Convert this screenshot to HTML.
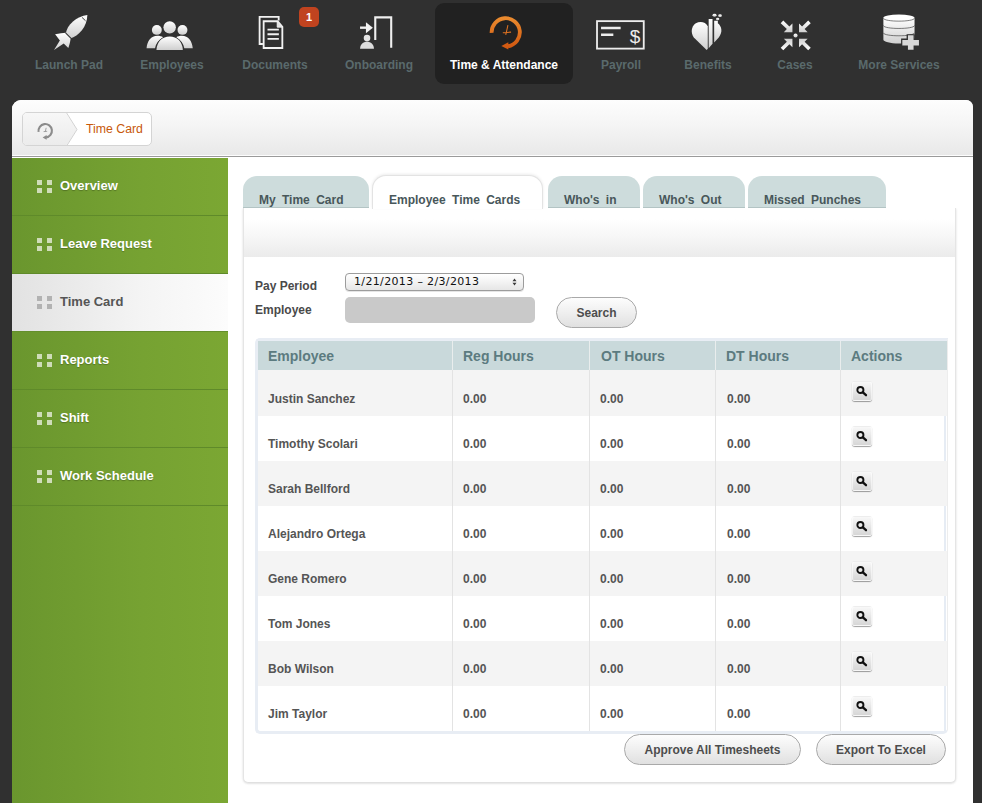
<!DOCTYPE html>
<html>
<head>
<meta charset="utf-8">
<title>Time Card</title>
<style>
*{box-sizing:border-box;margin:0;padding:0}
html,body{width:982px;height:803px;overflow:hidden;background:#303030;font-family:"Liberation Sans",Arial,Helvetica,sans-serif;}
body{position:relative}
.abs{position:absolute}
/* top nav */
.nav{position:absolute;left:0;top:0;width:982px;height:100px}
.nav .item{position:absolute;top:0;height:86px;text-align:center;color:#5a6a6c;font-weight:bold;font-size:12px;white-space:nowrap}
.nav .item .lbl{position:absolute;left:50%;top:58px;transform:translateX(-50%);line-height:14px}
.nav .item svg{position:absolute;overflow:visible}
.nav .active{position:absolute;left:435px;top:3px;width:138px;height:81px;border-radius:9px;background:#212121}
.nav .item.on{color:#fff}
.badge{position:absolute;left:299px;top:7px;width:20px;height:20px;border-radius:5px;background:#c0431f;color:#fff;font-size:11px;font-weight:bold;line-height:20px;text-align:center}
/* container */
.wrap{position:absolute;left:12px;top:100px;width:961px;height:720px;background:#fff;border-radius:9px 7px 0 0;overflow:hidden}
.hdr{position:absolute;left:0;top:0;width:961px;height:57px;background:linear-gradient(#fdfdfd,#f5f5f5 45%,#e8e8e8);border-bottom:1px solid #9a9a9a;box-shadow:inset 0 -1px 0 #fdfdfd}
.crumb{position:absolute;left:10px;top:12px;width:130px;height:34px;border:1px solid #d4d4d4;border-radius:5px;background:#fff;overflow:hidden}
.crumb .home{position:absolute;left:0;top:0;width:45px;height:32px;background:linear-gradient(#f6f6f6,#ececec)}
.crumb .txt{position:absolute;left:63px;top:0;line-height:32px;font-size:12.3px;color:#c8590a}
/* sidebar */
.side{position:absolute;left:0;top:58px;width:216px;height:680px;background:linear-gradient(90deg,#6a962e,#76a232 60%,#7ba733)}
.side .it{position:relative;height:58px;border-bottom:1px solid #5f8a2a;color:#fff;font-weight:bold;font-size:13px;line-height:15px;padding:20px 0 0 48px;text-shadow:0 1px 1px rgba(0,0,0,.25)}
.side .it.sel{background:linear-gradient(90deg,#e2e2e2,#f4f4f4 60%,#fcfcfc);color:#555;text-shadow:none;border-bottom-color:#648f2c}
.grip{position:absolute;left:25px;top:22px;width:15px;height:14px}
.grip i{position:absolute;width:5px;height:5px;background:#cfdcb9}
.sel .grip i{background:#b2b2b2}
.grip i:nth-child(1){left:0;top:0}.grip i:nth-child(2){left:10px;top:0}.grip i:nth-child(3){left:0;top:8px}.grip i:nth-child(4){left:10px;top:8px}
/* tabs */
.tab{position:absolute;top:76px;height:32px;background:#cddcdc;border-radius:14px 14px 0 0;color:#48575a;font-weight:bold;font-size:12px;word-spacing:3px;line-height:14px;padding:17px 0 0 16px;text-align:left;white-space:nowrap;border-bottom:1px solid #b3c4c4}
.tab.on{background:#fff;border:1px solid #e3e3e3;border-bottom:none;box-shadow:0 -1px 3px rgba(0,0,0,.08);top:75px;height:34px;padding:17px 0 0 16px}
.panel{position:absolute;left:231px;top:108px;width:713px;height:575px;background:#fff;border-radius:0 0 5px 5px;box-shadow:inset 1px 0 0 #e5e5e5,inset -1px 0 0 #e5e5e5,inset 0 -1px 0 #e0e0e0,0 1px 2px rgba(0,0,0,.08),0 0 3px rgba(0,0,0,.08)}
.band{position:absolute;left:1px;top:0;width:711px;height:49px;background:linear-gradient(#fff,#fff 22%,#f7f7f7 58%,#ebebeb)}
.panel::before{content:"";position:absolute;left:-6px;right:-6px;top:-6px;height:6px;background:#fff}
.lab{position:absolute;left:12px;font-size:12px;font-weight:bold;color:#4a4a4a;line-height:14px}
.sel1{position:absolute;left:102px;top:65px;width:179px;height:18px;border:1px solid #9c9c9c;border-radius:4px;background:linear-gradient(#fff,#f3f3f3 50%,#e6e6e6);font-family:"DejaVu Sans","Liberation Sans",sans-serif;font-size:11px;letter-spacing:0.35px;line-height:16px;padding-left:8px;color:#111;box-shadow:0 1px 0 rgba(0,0,0,.1)}
.inp{position:absolute;left:102px;top:89px;width:190px;height:26px;border-radius:5px;background:#c9c9c9}
.btn{position:absolute;height:31px;border:1px solid #a9a9a9;border-radius:16px;background:linear-gradient(#fdfdfd,#ececec 60%,#e0e0e0);font-weight:bold;font-size:12px;color:#4d4d4d;line-height:30px;text-align:center;white-space:nowrap}
/* table */
.tbl{position:absolute;left:12px;top:130px;width:693px;height:396px;border:3px solid #e8edf4;border-right:1px solid #ededed;border-radius:5px 0 5px 5px;background:#fff}
.rb{position:absolute;left:686px;top:29px;width:2px;height:361px;background:#e6ecf4}
.th{position:absolute;top:0;height:29px;background:#c9d9db;color:#5c7b80;font-weight:bold;font-size:14px;line-height:30px;padding-left:10px;border-left:1px solid #e9eded}
.row{position:absolute;left:0;width:686px;height:45px}
.row.odd{background:#f4f4f4;width:689px}
.row span{position:absolute;top:21px;font-size:12px;font-weight:bold;color:#555;line-height:14px;white-space:nowrap}
.row.first span{top:22px}
.vl{position:absolute;top:29px;width:1px;height:361px;background:#e3e3e3}
.mag{position:absolute;left:594px;top:10px;width:20px;height:20px;border-radius:3px;background:linear-gradient(#f8f8f8,#ececec 35%,#d6d6d6);border:1px solid rgba(255,255,255,.55);border-bottom-color:rgba(0,0,0,.0);box-shadow:0 1px 1px rgba(0,0,0,.38)}
</style>
</head>
<body>
<div class="nav">
  <div class="active"></div>
  <div class="item" style="left:29px;width:80px"><div class="lbl">Launch Pad</div></div>
  <div class="item" style="left:132px;width:80px"><div class="lbl">Employees</div></div>
  <div class="item" style="left:235px;width:80px"><div class="lbl">Documents</div></div>
  <div class="item" style="left:339px;width:80px"><div class="lbl">Onboarding</div></div>
  <div class="item on" style="left:444px;width:120px"><div class="lbl">Time &amp; Attendance</div></div>
  <div class="item" style="left:581px;width:80px"><div class="lbl">Payroll</div></div>
  <div class="item" style="left:668px;width:80px"><div class="lbl">Benefits</div></div>
  <div class="item" style="left:755px;width:80px"><div class="lbl">Cases</div></div>
  <div class="item" style="left:849px;width:100px"><div class="lbl">More Services</div></div>
  <div class="badge">1</div>
<svg class="abs" style="left:0;top:0" width="982" height="100" viewBox="0 0 982 100">
  <defs>
    <linearGradient id="gw" x1="0" y1="0" x2="0" y2="1"><stop offset="0" stop-color="#ffffff"/><stop offset="1" stop-color="#cfcfcf"/></linearGradient>
    <linearGradient id="go" x1="0" y1="0" x2="0" y2="1"><stop offset="0" stop-color="#ea8a2e"/><stop offset="1" stop-color="#d25a12"/></linearGradient>
  </defs>
  <!-- rocket + people : zoom coords offset (30,5) scale 1/5.456 -->
  <g transform="translate(30,5) scale(0.18328)" fill="url(#gw)">
    <path d="M313,54 C312,118 266,168 219,183 L195,158 C200,108 256,60 313,54 Z"/>
    <path d="M284,68 L303,86" stroke="#303030" stroke-width="5" fill="none"/>
    <path d="M137,160 C160,156 180,153 196,152 L222,180 C220,200 214,222 209,234 L184,210 L131,246 L163,194 Z"/>
    <path d="M194,152 L224,182" stroke="#303030" stroke-width="6" fill="none"/>
    <circle cx="692" cy="136" r="27"/>
    <circle cx="832" cy="136" r="27"/>
    <path d="M636,236 C640,195 660,170 695,168 C708,168 718,171 726,176 C702,190 686,212 682,236 Z"/>
    <path d="M888,236 C884,195 864,170 829,168 C816,168 806,171 798,176 C822,190 838,212 842,236 Z"/>
    <circle cx="762" cy="122" r="34" stroke="#303030" stroke-width="7" paint-order="stroke"/>
    <path d="M690,246 C692,200 722,172 762,172 C802,172 832,200 834,246 Z" stroke="#303030" stroke-width="7" paint-order="stroke"/>
    <rect x="680" y="246" width="170" height="10" fill="#303030"/>
  </g>
  <!-- documents + onboarding : offset (240,0) -->
  <g transform="translate(240,0) scale(0.18328)" fill="none" stroke="#f2f2f2" stroke-width="10">
    <path d="M125,240 L107,240 L107,92 L211,92 L211,112"/>
    <path d="M129,116 L205,116 L231,146 L231,262 L129,262 Z" fill="#303030"/>
    <path d="M203,116 L203,148 L231,148 Z" stroke-width="5" fill="#e4e4e4"/>
    <path d="M150,162 L212,162 M150,187 L212,187 M150,212 L212,212" stroke-width="10"/>
    <path d="M738,218 L738,95 L825,95 L825,260" stroke="#efefef" stroke-width="11.5"/>
    <path d="M655,151 L700,151" stroke-width="13"/>
    <path d="M687,121 L725,151 L687,181 Z" fill="#f2f2f2" stroke="none"/>
    <circle cx="693" cy="208" r="18" fill="#e4e4e4" stroke="none"/>
    <path d="M655,266 C657,240 672,228 693,228 C714,228 729,240 731,266 Z" fill="#dcdcdc" stroke="none"/>
  </g>
  <!-- clock + payroll : offset (470,5) -->
  <g transform="translate(470,5) scale(0.18328)" fill="none">
    <path d="M118,152 A77,77 0 1 1 207,225" stroke="url(#go)" stroke-width="21"/>
    <path d="M209,203 L209,243 L171,224 Z" fill="#d25a12"/>
    <path d="M207,110 L195,163 M179,151 L224,148" stroke="#e27422" stroke-width="5.5"/>
    <rect x="693" y="88" width="255" height="150" stroke="#ececec" stroke-width="10"/>
    <path d="M715,125 L822,125 M715,162 L782,162" stroke="#ececec" stroke-width="14"/>
  </g>
  <text x="635" y="43" font-family="Liberation Sans, sans-serif" font-size="19" fill="#ececec" text-anchor="middle">$</text>
  <!-- benefits + cases : offset (670,5) -->
  <g transform="translate(670,5) scale(0.18328)" fill="url(#gw)">
    <path d="M200,246 L206,239 L206,116 C196,93 164,86 141,100 C115,118 112,152 130,178 Z"/>
    <path d="M211,76 L232,76 L232,212 L211,236 Z"/>
    <path d="M241,86 L261,86 L261,100 C284,118 288,150 266,178 L241,204 Z"/>
    <ellipse cx="243" cy="56" rx="11" ry="8"/><ellipse cx="273" cy="58" rx="10" ry="8"/><ellipse cx="260" cy="76" rx="9" ry="7"/>
    <circle cx="685" cy="167" r="11"/>
    <g id="arr"><path d="M604,99 L618,85 L651.4,117.6 L668,101 L668,148 L621,148 L637.6,131.4 Z"/></g>
    <use href="#arr" transform="translate(1372,0) scale(-1,1)"/>
    <use href="#arr" transform="translate(0,332) scale(1,-1)"/>
    <use href="#arr" transform="translate(1372,332) scale(-1,-1)"/>
  </g>
  <!-- more services : offset (840,5) scale 1/8.183 -->
  <g transform="translate(840,5) scale(0.1222)" fill="url(#gw)">
    <path d="M355,105 L355,285 C355,300 410,316 482,316 C554,316 610,300 610,285 L610,105 Z"/>
    <ellipse cx="482" cy="105" rx="127" ry="28" fill="#fff"/>
    <path d="M355,108 C360,140 604,140 610,108 M355,168 C360,200 604,200 610,168 M355,228 C360,260 604,260 610,228" fill="none" stroke="#303030" stroke-width="5"/>
    <path d="M545,240 L612,240 L612,275 L655,275 L655,340 L612,340 L612,372 L545,372 L545,340 L500,340 L500,275 L545,275 Z" fill="#303030"/>
    <path d="M556,248 L602,248 L602,286 L646,286 L646,332 L602,332 L602,366 L556,366 L556,332 L510,332 L510,286 L556,286 Z" fill="#d8d8d8"/>
  </g>
</svg>
</div>

<div class="wrap">
  <div class="hdr">
    <div class="crumb"><svg class="abs" style="left:0;top:0" width="70" height="32" viewBox="0 0 70 32">
      <defs><linearGradient id="gh" x1="0" y1="0" x2="0" y2="1"><stop offset="0" stop-color="#f7f7f7"/><stop offset="1" stop-color="#ebebeb"/></linearGradient></defs>
      <path d="M0,0 L43,0 L54,16.5 L43,33 L0,33 Z" fill="url(#gh)"/>
      <path d="M43,-1 L54,16.5 L43,34" fill="none" stroke="#d2d2d2" stroke-width="1"/>
      <g transform="translate(0,0.8)"><path d="M15.6,18 A6.7,6.7 0 1 1 23,23.6" fill="none" stroke="#8c8c8c" stroke-width="2.1"/>
      <path d="M23.6,21.2 L23.6,26 L19.6,23.7 Z" fill="#8c8c8c"/>
      <path d="M23.2,14 L22.2,18.2 M20.6,17.8 L24.2,17.5" stroke="#9a9a9a" stroke-width="0.9" fill="none"/></g>
    </svg><div class="txt">Time Card</div></div>
  </div>
  <div class="side">
    <div class="it"><div class="grip"><i></i><i></i><i></i><i></i></div>Overview</div>
    <div class="it"><div class="grip"><i></i><i></i><i></i><i></i></div>Leave Request</div>
    <div class="it sel"><div class="grip"><i></i><i></i><i></i><i></i></div>Time Card</div>
    <div class="it"><div class="grip"><i></i><i></i><i></i><i></i></div>Reports</div>
    <div class="it"><div class="grip"><i></i><i></i><i></i><i></i></div>Shift</div>
    <div class="it"><div class="grip"><i></i><i></i><i></i><i></i></div>Work Schedule</div>
  </div>

  <div class="panel">
    <div class="band"></div>
    <div class="lab" style="top:71px">Pay Period</div>
    <div class="lab" style="top:95px">Employee</div>
    <div class="sel1">1/21/2013 – 2/3/2013<svg class="abs" style="left:165px;top:3px" width="7" height="10" viewBox="0 0 7 10"><path d="M1.5,4.2 L3.5,1.4 L5.5,4.2 Z M1.5,5.8 L3.5,8.6 L5.5,5.8 Z" fill="#3a3a3a"/></svg></div>
    <div class="inp"></div>
    <div class="btn" style="left:313px;top:89px;width:81px">Search</div>
    <div class="tbl">
      <div class="th" style="left:0px;width:194px;border-left:none">Employee</div>
      <div class="th" style="left:194px;width:137px">Reg Hours</div>
      <div class="th" style="left:331px;width:126px;padding-left:11px">OT Hours</div>
      <div class="th" style="left:457px;width:125px;padding-left:10px">DT Hours</div>
      <div class="th" style="left:582px;width:107px">Actions</div>
      <div class="rb"></div>
      <div class="row odd first" style="top:29px;height:46px"><span style="left:10px">Justin Sanchez</span><span style="left:205px">0.00</span><span style="left:342px">0.00</span><span style="left:469px">0.00</span><div class="mag" style="top:11px"><svg width="18" height="18" viewBox="0 0 18 18"><circle cx="7.4" cy="8" r="3.05" fill="none" stroke="#111" stroke-width="1.9"/><path d="M9.9 10.3 L13 13.2" stroke="#111" stroke-width="2.3" stroke-linecap="round"/></svg></div></div>
      <div class="row" style="top:75px"><span style="left:10px">Timothy Scolari</span><span style="left:205px">0.00</span><span style="left:342px">0.00</span><span style="left:469px">0.00</span><div class="mag"><svg width="18" height="18" viewBox="0 0 18 18"><circle cx="7.4" cy="8" r="3.05" fill="none" stroke="#111" stroke-width="1.9"/><path d="M9.9 10.3 L13 13.2" stroke="#111" stroke-width="2.3" stroke-linecap="round"/></svg></div></div>
      <div class="row odd" style="top:120px"><span style="left:10px">Sarah Bellford</span><span style="left:205px">0.00</span><span style="left:342px">0.00</span><span style="left:469px">0.00</span><div class="mag"><svg width="18" height="18" viewBox="0 0 18 18"><circle cx="7.4" cy="8" r="3.05" fill="none" stroke="#111" stroke-width="1.9"/><path d="M9.9 10.3 L13 13.2" stroke="#111" stroke-width="2.3" stroke-linecap="round"/></svg></div></div>
      <div class="row" style="top:165px"><span style="left:10px">Alejandro Ortega</span><span style="left:205px">0.00</span><span style="left:342px">0.00</span><span style="left:469px">0.00</span><div class="mag"><svg width="18" height="18" viewBox="0 0 18 18"><circle cx="7.4" cy="8" r="3.05" fill="none" stroke="#111" stroke-width="1.9"/><path d="M9.9 10.3 L13 13.2" stroke="#111" stroke-width="2.3" stroke-linecap="round"/></svg></div></div>
      <div class="row odd" style="top:210px"><span style="left:10px">Gene Romero</span><span style="left:205px">0.00</span><span style="left:342px">0.00</span><span style="left:469px">0.00</span><div class="mag"><svg width="18" height="18" viewBox="0 0 18 18"><circle cx="7.4" cy="8" r="3.05" fill="none" stroke="#111" stroke-width="1.9"/><path d="M9.9 10.3 L13 13.2" stroke="#111" stroke-width="2.3" stroke-linecap="round"/></svg></div></div>
      <div class="row" style="top:255px"><span style="left:10px">Tom Jones</span><span style="left:205px">0.00</span><span style="left:342px">0.00</span><span style="left:469px">0.00</span><div class="mag"><svg width="18" height="18" viewBox="0 0 18 18"><circle cx="7.4" cy="8" r="3.05" fill="none" stroke="#111" stroke-width="1.9"/><path d="M9.9 10.3 L13 13.2" stroke="#111" stroke-width="2.3" stroke-linecap="round"/></svg></div></div>
      <div class="row odd" style="top:300px"><span style="left:10px">Bob Wilson</span><span style="left:205px">0.00</span><span style="left:342px">0.00</span><span style="left:469px">0.00</span><div class="mag"><svg width="18" height="18" viewBox="0 0 18 18"><circle cx="7.4" cy="8" r="3.05" fill="none" stroke="#111" stroke-width="1.9"/><path d="M9.9 10.3 L13 13.2" stroke="#111" stroke-width="2.3" stroke-linecap="round"/></svg></div></div>
      <div class="row" style="top:345px"><span style="left:10px">Jim Taylor</span><span style="left:205px">0.00</span><span style="left:342px">0.00</span><span style="left:469px">0.00</span><div class="mag"><svg width="18" height="18" viewBox="0 0 18 18"><circle cx="7.4" cy="8" r="3.05" fill="none" stroke="#111" stroke-width="1.9"/><path d="M9.9 10.3 L13 13.2" stroke="#111" stroke-width="2.3" stroke-linecap="round"/></svg></div></div>
      <div class="vl" style="left:194px"></div>
      <div class="vl" style="left:331px"></div>
      <div class="vl" style="left:457px"></div>
      <div class="vl" style="left:582px"></div>
    </div>
    <div class="btn" style="left:381px;top:526px;width:177px">Approve All Timesheets</div>
    <div class="btn" style="left:573px;top:526px;width:130px">Export To Excel</div>
  </div>
  <div class="tab" style="left:231px;width:126px">My Time Card</div>
  <div class="tab on" style="left:360px;width:171px">Employee Time Cards</div>
  <div class="tab" style="left:536px;width:92px">Who's in</div>
  <div class="tab" style="left:631px;width:102px">Who's Out</div>
  <div class="tab" style="left:736px;width:138px">Missed Punches</div>
</div>
</body>
</html>
